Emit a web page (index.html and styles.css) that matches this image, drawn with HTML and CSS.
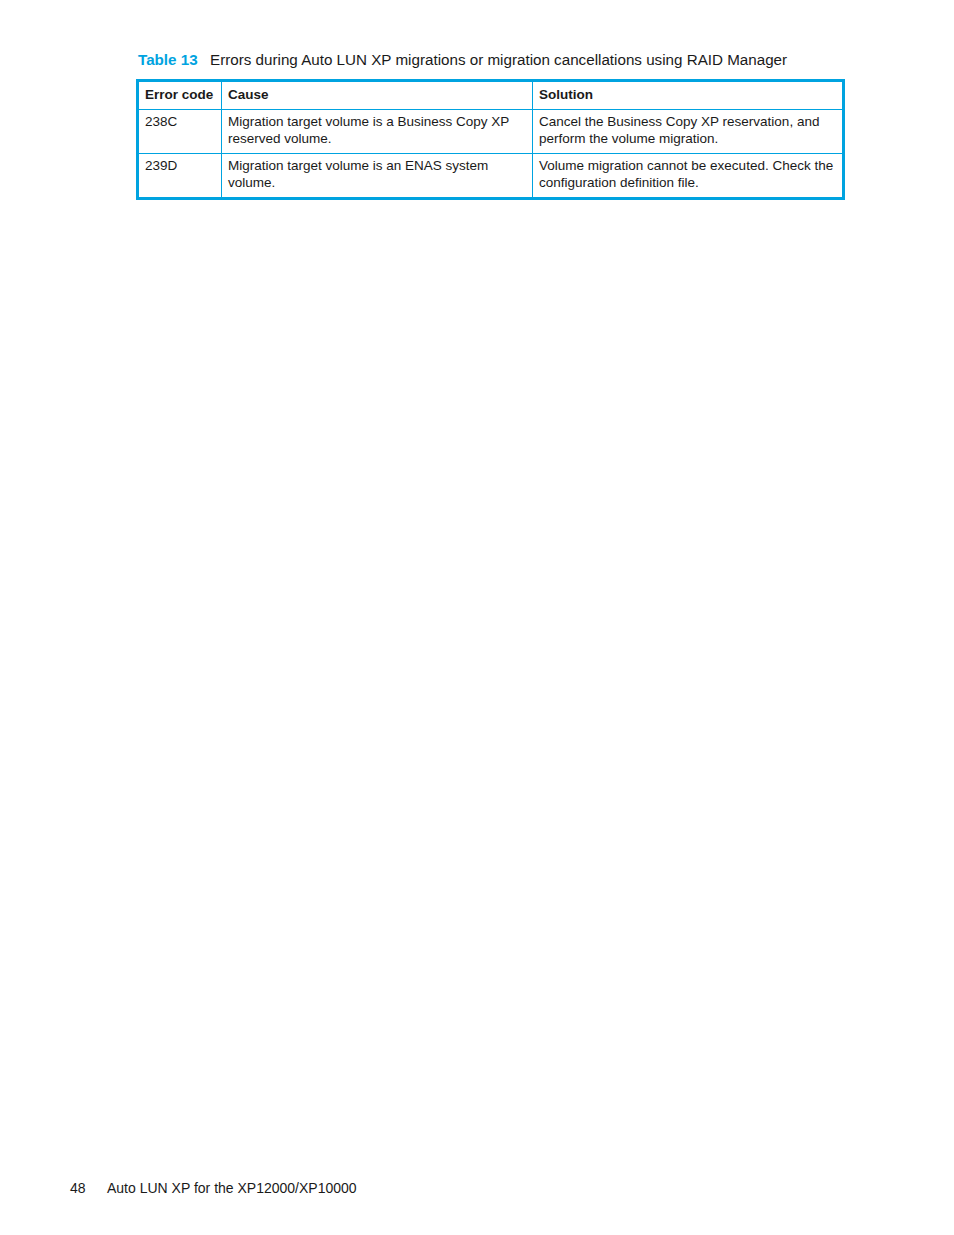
FILE: index.html
```html
<!DOCTYPE html>
<html>
<head>
<meta charset="utf-8">
<link rel="stylesheet" href="styles.css">
</head>
<body>
<div class="page">
  <div class="caption"><span class="cap-label">Table 13</span><span class="cap-text">Errors during Auto LUN XP migrations or migration cancellations using RAID Manager</span></div>
  <table class="errors">
    <colgroup>
      <col class="c1"><col class="c2"><col class="c3">
    </colgroup>
    <thead>
      <tr><th>Error code</th><th>Cause</th><th>Solution</th></tr>
    </thead>
    <tbody>
      <tr><td>238C</td><td>Migration target volume is a Business Copy XP reserved volume.</td><td>Cancel the Business Copy XP reservation, and perform the volume migration.</td></tr>
      <tr><td>239D</td><td>Migration target volume is an ENAS system volume.</td><td>Volume migration cannot be executed. Check the configuration definition file.</td></tr>
    </tbody>
  </table>
  <div class="footer"><span class="pnum">48</span><span class="ftext">Auto LUN XP for the XP12000/XP10000</span></div>
</div>
</body>
</html>
```
FILE: styles.css
```css
html, body { margin: 0; padding: 0; background: #fff; }
body { font-family: "Liberation Sans", Arial, sans-serif; color: #1a1a1a; }
.page { height: 1235px; display: flex; flex-direction: column; padding: 0 0 0 136px; box-sizing: border-box; }
.caption { margin-top: 50px; padding-left: 2px; font-size: 15.2px; line-height: 20px; white-space: nowrap; }
.cap-label { color: #00a3e0; font-weight: bold; display: inline-block; width: 72px; }
.cap-text { color: #1a1a1a; }
.errors { margin-top: 9px; width: 706px; border-collapse: collapse; table-layout: fixed; border: 3px solid #00a3e0; font-size: 13.5px; line-height: 17px; }
.c1 { width: 84px; }
.c2 { width: 311px; }
.c3 { width: 311px; }
.errors th, .errors td { border: 1px solid #00a3e0; text-align: left; vertical-align: top; }
.errors th { font-weight: bold; padding: 4px 6px 6px 6px; }
.errors td { padding: 3px 6px 6px 6px; }
.footer { margin-top: auto; margin-left: -66px; padding-bottom: 37px; font-size: 14px; line-height: 20px; white-space: nowrap; }
.pnum { display: inline-block; width: 37px; }
```
